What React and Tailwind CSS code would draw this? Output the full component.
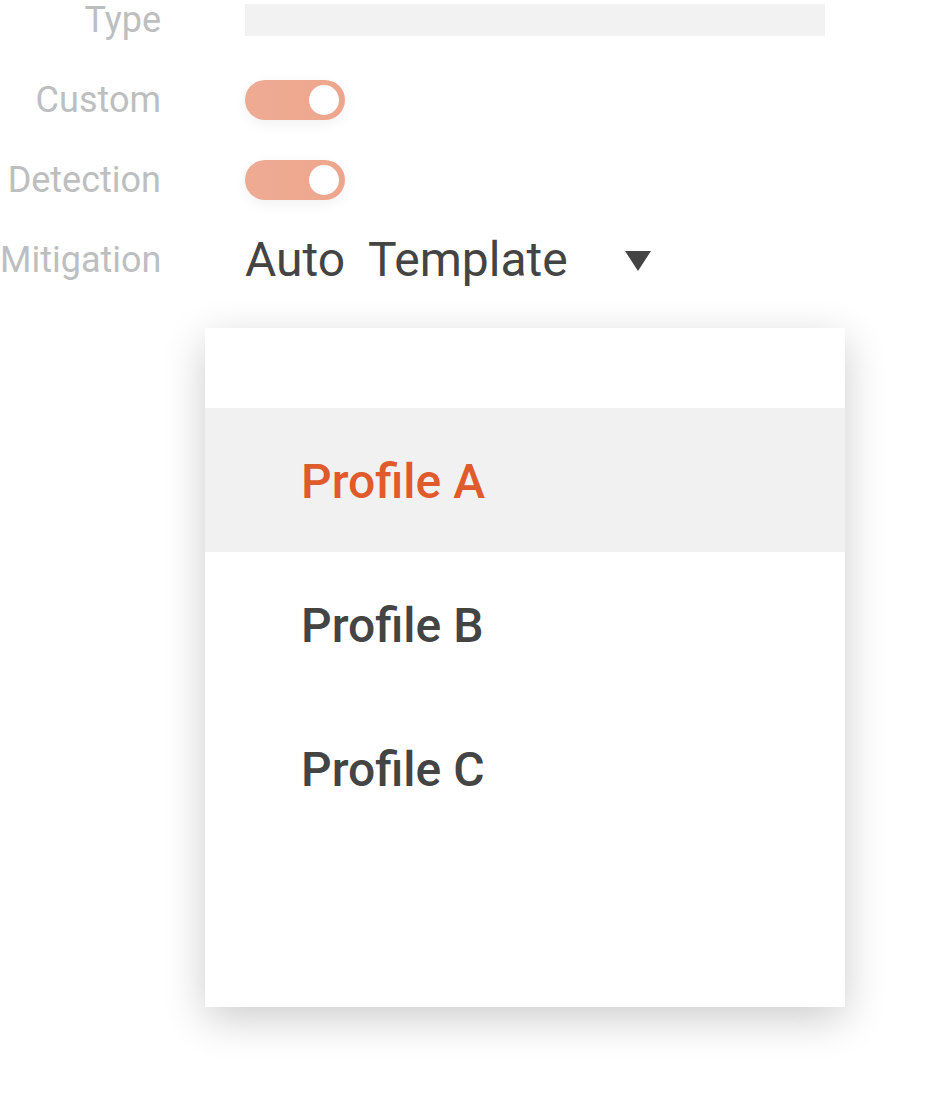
import React from "react";

const labelCls = "w-[161px] text-right text-[36px] leading-none text-[#bdbec0]";

function Toggle() {
  return (
    <div className="relative w-[100px] h-[40px] rounded-full bg-gradient-to-r from-[#eeab93] to-[#eda68d] shadow-[0_4px_14px_rgba(0,0,0,0.06)]">
      <div className="absolute right-[6px] top-[5px] w-[30px] h-[30px] rounded-full bg-white" />
    </div>
  );
}

export default function App() {
  const profiles = ["Profile A", "Profile B", "Profile C"];
  return (
    <div className="w-[936px] h-[1113px] bg-white overflow-hidden" style={{ fontFamily: "Roboto, 'Liberation Sans', sans-serif" }}>
      <div className="flex flex-col gap-[40px]">
        <div className="flex items-center h-[40px] gap-[84px]">
          <span className={labelCls}>Type</span>
          <div className="w-[580px] h-[32px] bg-[#f2f2f2]" />
        </div>
        <div className="flex items-center h-[40px] gap-[84px]">
          <span className={labelCls}>Custom</span>
          <Toggle />
        </div>
        <div className="flex items-center h-[40px] gap-[84px]">
          <span className={labelCls}>Detection</span>
          <Toggle />
        </div>
        <div className="flex items-center h-[40px] gap-[84px]">
          <span className={labelCls}>Mitigation</span>
          <div className="flex items-center">
            <span className="text-[48px] leading-none text-[#444444] whitespace-pre">Auto  Template</span>
            <svg className="ml-[56px] mt-[2px]" width="28" height="22" viewBox="0 0 28 22">
              <polygon points="1,1 27,1 14,21" fill="#444444" />
            </svg>
          </div>
        </div>
      </div>

      <div className="ml-[205px] mt-[48px] w-[640px] h-[679px] bg-white shadow-[0_12px_40px_rgba(0,0,0,0.2)] pt-[80px]">
        {profiles.map((p, i) => (
          <div
            key={p}
            className={
              "h-[144px] flex items-center pl-[96px] pt-[4px] text-[48px] font-medium " +
              (i === 0 ? "bg-[#f1f1f1] text-[#e05a2b]" : "text-[#444444]")
            }
          >
            {p}
          </div>
        ))}
      </div>
    </div>
  );
}
